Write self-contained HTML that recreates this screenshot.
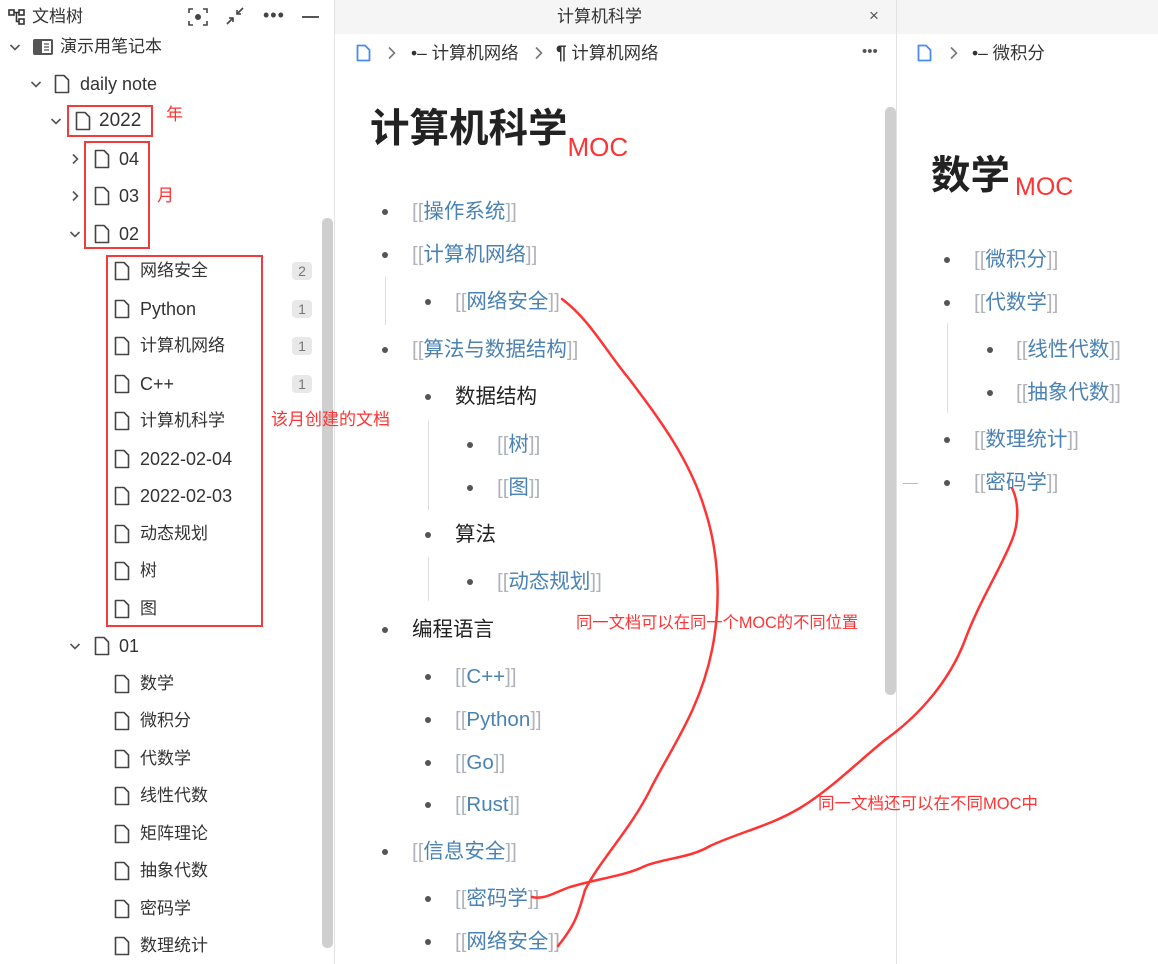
<!DOCTYPE html>
<html><head><meta charset="utf-8"><style>
*{margin:0;padding:0;box-sizing:border-box}
body{width:1158px;height:964px;overflow:hidden;background:#fff;font-family:"Liberation Sans","Noto Sans CJK SC",sans-serif;color:#222;position:relative}
.a{position:absolute;white-space:nowrap;line-height:24px}
.s{font-size:17px;color:#333}
.m{font-size:20.5px}
.l{color:#4a82b4}.b{color:#b0b4ba}
.dot{position:absolute;width:6px;height:6px;border-radius:50%;background:#555}
.vl{position:absolute;width:1px;background:#ddd}
.r{color:#f33}
.badge{position:absolute;left:292px;width:20px;height:18px;border-radius:4px;background:#e8e8e8;color:#777;font-size:14px;text-align:center;line-height:18px}
.box{position:absolute;border:2px solid #f03c3c}
svg.i{position:absolute}
</style></head><body>
<!-- sidebar -->
<div style="position:absolute;left:334px;top:0;width:1px;height:964px;background:#e2e2e2"></div>
<div style="position:absolute;left:322px;top:218px;width:11px;height:730px;background:#cfcfcf;border-radius:5px"></div>
<svg class="i" style="left:8px;top:9px" width="18" height="16" viewBox="0 0 18 16" fill="none" stroke="#333" stroke-width="1.6"><rect x="1" y="1" width="5" height="5"/><rect x="11" y="1" width="5" height="5"/><rect x="11" y="10" width="5" height="5"/><path d="M6 3.5h5M8.5 3.5v9h2.5"/></svg>
<div class="a s" style="left:32px;top:5px">文档树</div>
<svg class="i" style="left:188px;top:8px" width="20" height="18" viewBox="0 0 20 18" fill="none" stroke="#444" stroke-width="1.6"><path d="M1 5V1h4M15 1h4v4M19 13v4h-4M5 17H1v-4"/><circle cx="10" cy="9" r="2.2" fill="#444"/></svg>
<svg class="i" style="left:226px;top:7px" width="18" height="18" viewBox="0 0 18 18" fill="none" stroke="#444" stroke-width="1.6"><path d="M17 1l-6 6M11 3v4h4M1 17l6-6M7 15v-4H3"/></svg>
<div class="a" style="left:263px;top:3px;font-size:18px;color:#444;letter-spacing:1px">•••</div>
<div style="position:absolute;left:302px;top:16px;width:17px;height:2px;background:#555"></div>
<svg width="0" height="0" style="position:absolute"><defs>
<symbol id="chev" viewBox="0 0 12 12"><path d="M1.5 4l4.5 4.5L10.5 4" fill="none" stroke="#555" stroke-width="1.6"/></symbol>
<symbol id="chr" viewBox="0 0 12 12"><path d="M4 1.5l4.5 4.5L4 10.5" fill="none" stroke="#555" stroke-width="1.6"/></symbol>
<symbol id="doc" viewBox="0 0 16 20"><path d="M1.5 1.5h8.5l4.5 4.5v12.5h-13z" fill="none" stroke="#444" stroke-width="1.6" stroke-linejoin="round"/></symbol>
</defs></svg>
<svg class="i" style="left:9px;top:41px" width="12" height="12"><use href="#chev"/></svg>
<svg class="i" style="left:33px;top:39px" width="20" height="16" viewBox="0 0 20 16"><rect x="0" y="0" width="20" height="16" rx="2" fill="#555"/><rect x="9" y="2" width="9" height="12" fill="#fff"/><path d="M11 5h5M11 8h5M11 11h5" stroke="#555" stroke-width="1.2"/></svg>
<div class="a s" style="left:60px;top:35px">演示用笔记本</div>
<svg class="i" style="left:30px;top:78px" width="12" height="12"><use href="#chev"/></svg>
<svg class="i" style="left:54px;top:74px" width="16" height="20"><use href="#doc"/></svg>
<div class="a s" style="left:80px;top:72px;font-size:18px">daily note</div>
<svg class="i" style="left:50px;top:115px" width="12" height="12"><use href="#chev"/></svg>
<svg class="i" style="left:75px;top:111px" width="16" height="20"><use href="#doc"/></svg>
<div class="a s" style="left:99px;top:109px;font-size:19px">2022</div>
<svg class="i" style="left:69px;top:153px" width="12" height="12"><use href="#chr"/></svg>
<svg class="i" style="left:94px;top:149px" width="16" height="20"><use href="#doc"/></svg>
<div class="a s" style="left:119px;top:147px;font-size:18px">04</div>
<svg class="i" style="left:69px;top:190px" width="12" height="12"><use href="#chr"/></svg>
<svg class="i" style="left:94px;top:186px" width="16" height="20"><use href="#doc"/></svg>
<div class="a s" style="left:119px;top:184px;font-size:18px">03</div>
<svg class="i" style="left:69px;top:228px" width="12" height="12"><use href="#chev"/></svg>
<svg class="i" style="left:94px;top:224px" width="16" height="20"><use href="#doc"/></svg>
<div class="a s" style="left:119px;top:222px;font-size:18px">02</div>
<svg class="i" style="left:114px;top:261px" width="16" height="20"><use href="#doc"/></svg><div class="a s" style="left:140px;top:259px">网络安全</div><div class="badge" style="top:262px">2</div>
<svg class="i" style="left:114px;top:299px" width="16" height="20"><use href="#doc"/></svg><div class="a s" style="left:140px;top:297px;font-size:18px">Python</div><div class="badge" style="top:300px">1</div>
<svg class="i" style="left:114px;top:336px" width="16" height="20"><use href="#doc"/></svg><div class="a s" style="left:140px;top:334px">计算机网络</div><div class="badge" style="top:337px">1</div>
<svg class="i" style="left:114px;top:374px" width="16" height="20"><use href="#doc"/></svg><div class="a s" style="left:140px;top:372px;font-size:18px">C++</div><div class="badge" style="top:375px">1</div>
<svg class="i" style="left:114px;top:411px" width="16" height="20"><use href="#doc"/></svg><div class="a s" style="left:140px;top:409px">计算机科学</div>
<svg class="i" style="left:114px;top:449px" width="16" height="20"><use href="#doc"/></svg><div class="a s" style="left:140px;top:447px;font-size:18px">2022-02-04</div>
<svg class="i" style="left:114px;top:486px" width="16" height="20"><use href="#doc"/></svg><div class="a s" style="left:140px;top:484px;font-size:18px">2022-02-03</div>
<svg class="i" style="left:114px;top:524px" width="16" height="20"><use href="#doc"/></svg><div class="a s" style="left:140px;top:522px">动态规划</div>
<svg class="i" style="left:114px;top:561px" width="16" height="20"><use href="#doc"/></svg><div class="a s" style="left:140px;top:559px">树</div>
<svg class="i" style="left:114px;top:599px" width="16" height="20"><use href="#doc"/></svg><div class="a s" style="left:140px;top:597px">图</div>
<svg class="i" style="left:69px;top:640px" width="12" height="12"><use href="#chev"/></svg>
<svg class="i" style="left:94px;top:636px" width="16" height="20"><use href="#doc"/></svg>
<div class="a s" style="left:119px;top:634px;font-size:18px">01</div>
<svg class="i" style="left:114px;top:674px" width="16" height="20"><use href="#doc"/></svg><div class="a s" style="left:140px;top:672px">数学</div>
<svg class="i" style="left:114px;top:711px" width="16" height="20"><use href="#doc"/></svg><div class="a s" style="left:140px;top:709px">微积分</div>
<svg class="i" style="left:114px;top:749px" width="16" height="20"><use href="#doc"/></svg><div class="a s" style="left:140px;top:747px">代数学</div>
<svg class="i" style="left:114px;top:786px" width="16" height="20"><use href="#doc"/></svg><div class="a s" style="left:140px;top:784px">线性代数</div>
<svg class="i" style="left:114px;top:824px" width="16" height="20"><use href="#doc"/></svg><div class="a s" style="left:140px;top:822px">矩阵理论</div>
<svg class="i" style="left:114px;top:861px" width="16" height="20"><use href="#doc"/></svg><div class="a s" style="left:140px;top:859px">抽象代数</div>
<svg class="i" style="left:114px;top:899px" width="16" height="20"><use href="#doc"/></svg><div class="a s" style="left:140px;top:897px">密码学</div>
<svg class="i" style="left:114px;top:936px" width="16" height="20"><use href="#doc"/></svg><div class="a s" style="left:140px;top:934px">数理统计</div>
<div class="box" style="left:67px;top:105px;width:86px;height:32px"></div>
<div class="box" style="left:84px;top:141px;width:66px;height:108px"></div>
<div class="box" style="left:106px;top:255px;width:157px;height:372px"></div>
<div class="a r" style="left:166px;top:103px;font-size:17px">年</div>
<div class="a r" style="left:157px;top:184px;font-size:17px">月</div>
<div class="a r" style="left:271px;top:408px;font-size:17px">该月创建的文档</div>

<!-- middle panel -->
<div style="position:absolute;left:335px;top:0;width:562px;height:34px;background:#f5f5f5"></div>
<div style="position:absolute;left:896px;top:0;width:1px;height:964px;background:#e2e2e2"></div>
<div style="position:absolute;left:897px;top:0;width:261px;height:34px;background:#f5f5f5"></div>
<div class="a" style="left:557px;top:5px;font-size:17px;color:#333">计算机科学</div>
<div class="a" style="left:869px;top:4px;font-size:17px;color:#555">×</div>
<svg class="i" style="left:356px;top:44px" width="15" height="18" viewBox="0 0 15 18"><path d="M1.5 1.5h7.5l4.5 4.5v10.5h-12z" fill="none" stroke="#4a8af4" stroke-width="1.8" stroke-linejoin="round"/></svg>
<svg class="i" style="left:386px;top:46px" width="12" height="14" viewBox="0 0 12 14"><path d="M3 1.5l5.5 5.5L3 12.5" fill="none" stroke="#777" stroke-width="1.6"/></svg>
<div class="a" style="left:411px;top:41px;font-size:17.4px;color:#333">•– 计算机网络</div>
<svg class="i" style="left:533px;top:46px" width="12" height="14" viewBox="0 0 12 14"><path d="M3 1.5l5.5 5.5L3 12.5" fill="none" stroke="#777" stroke-width="1.6"/></svg>
<div class="a" style="left:556px;top:41px;font-size:17.4px;color:#333"><b style="font-size:19px">¶</b> 计算机网络</div>
<div class="a" style="left:862px;top:40px;font-size:15px;color:#555">•••</div>
<div style="position:absolute;left:885px;top:107px;width:11px;height:588px;background:#cfcfcf;border-radius:5px"></div>
<div class="a" style="left:370px;top:105px;font-size:39.5px;font-weight:bold;line-height:48px">计算机科学<span class="r" style="font-size:26px;font-weight:normal;vertical-align:-14px">MOC</span></div>

<div class="dot" style="left:382px;top:209px"></div><div class="a m" style="left:412px;top:200px"><span class="b">[[</span><span class="l">操作系统</span><span class="b">]]</span></div>
<div class="dot" style="left:382px;top:252px"></div><div class="a m" style="left:412px;top:243px"><span class="b">[[</span><span class="l">计算机网络</span><span class="b">]]</span></div>
<div class="vl" style="left:385px;top:277px;height:48px"></div>
<div class="dot" style="left:425px;top:299px"></div><div class="a m" style="left:455px;top:290px"><span class="b">[[</span><span class="l">网络安全</span><span class="b">]]</span></div>
<div class="dot" style="left:382px;top:347px"></div><div class="a m" style="left:412px;top:338px"><span class="b">[[</span><span class="l">算法与数据结构</span><span class="b">]]</span></div>
<div class="dot" style="left:425px;top:394px"></div><div class="a m" style="left:455px;top:385px">数据结构</div>
<div class="vl" style="left:428px;top:420px;height:90px"></div>
<div class="dot" style="left:467px;top:442px"></div><div class="a m" style="left:497px;top:433px"><span class="b">[[</span><span class="l">树</span><span class="b">]]</span></div>
<div class="dot" style="left:467px;top:485px"></div><div class="a m" style="left:497px;top:476px"><span class="b">[[</span><span class="l">图</span><span class="b">]]</span></div>
<div class="dot" style="left:425px;top:532px"></div><div class="a m" style="left:455px;top:523px">算法</div>
<div class="vl" style="left:428px;top:557px;height:44px"></div>
<div class="dot" style="left:467px;top:579px"></div><div class="a m" style="left:497px;top:570px"><span class="b">[[</span><span class="l">动态规划</span><span class="b">]]</span></div>
<div class="dot" style="left:382px;top:627px"></div><div class="a m" style="left:412px;top:618px">编程语言</div>
<div class="dot" style="left:425px;top:674px"></div><div class="a m" style="left:455px;top:665px"><span class="b">[[</span><span class="l">C++</span><span class="b">]]</span></div>
<div class="dot" style="left:425px;top:717px"></div><div class="a m" style="left:455px;top:708px"><span class="b">[[</span><span class="l">Python</span><span class="b">]]</span></div>
<div class="dot" style="left:425px;top:760px"></div><div class="a m" style="left:455px;top:751px"><span class="b">[[</span><span class="l">Go</span><span class="b">]]</span></div>
<div class="dot" style="left:425px;top:802px"></div><div class="a m" style="left:455px;top:793px"><span class="b">[[</span><span class="l">Rust</span><span class="b">]]</span></div>
<div class="dot" style="left:382px;top:849px"></div><div class="a m" style="left:412px;top:840px"><span class="b">[[</span><span class="l">信息安全</span><span class="b">]]</span></div>
<div class="dot" style="left:425px;top:896px"></div><div class="a m" style="left:455px;top:887px"><span class="b">[[</span><span class="l">密码学</span><span class="b">]]</span></div>
<div class="dot" style="left:425px;top:939px"></div><div class="a m" style="left:455px;top:930px"><span class="b">[[</span><span class="l">网络安全</span><span class="b">]]</span></div>

<!-- right panel -->
<svg class="i" style="left:917px;top:44px" width="15" height="18" viewBox="0 0 15 18"><path d="M1.5 1.5h7.5l4.5 4.5v10.5h-12z" fill="none" stroke="#4a8af4" stroke-width="1.8" stroke-linejoin="round"/></svg>
<svg class="i" style="left:948px;top:46px" width="12" height="14" viewBox="0 0 12 14"><path d="M3 1.5l5.5 5.5L3 12.5" fill="none" stroke="#777" stroke-width="1.6"/></svg>
<div class="a" style="left:972px;top:41px;font-size:17.4px;color:#333">•– 微积分</div>
<div class="a" style="left:931px;top:152px;font-size:39.5px;font-weight:bold;line-height:48px">数学<span class="r" style="font-size:25px;font-weight:normal;vertical-align:-6px;margin-left:5px">MOC</span></div>
<div class="dot" style="left:944px;top:257px"></div><div class="a m" style="left:974px;top:248px"><span class="b">[[</span><span class="l">微积分</span><span class="b">]]</span></div>
<div class="dot" style="left:944px;top:300px"></div><div class="a m" style="left:974px;top:291px"><span class="b">[[</span><span class="l">代数学</span><span class="b">]]</span></div>
<div class="vl" style="left:947px;top:323px;height:90px"></div>
<div class="dot" style="left:987px;top:347px"></div><div class="a m" style="left:1016px;top:338px"><span class="b">[[</span><span class="l">线性代数</span><span class="b">]]</span></div>
<div class="dot" style="left:987px;top:390px"></div><div class="a m" style="left:1016px;top:381px"><span class="b">[[</span><span class="l">抽象代数</span><span class="b">]]</span></div>
<div class="dot" style="left:944px;top:437px"></div><div class="a m" style="left:974px;top:428px"><span class="b">[[</span><span class="l">数理统计</span><span class="b">]]</span></div>
<div class="dot" style="left:944px;top:480px"></div><div class="a m" style="left:974px;top:471px"><span class="b">[[</span><span class="l">密码学</span><span class="b">]]</span></div>
<div style="position:absolute;left:903px;top:483px;width:15px;height:1px;background:#bbb"></div>

<div class="a r" style="left:576px;top:611px;font-size:16.3px">同一文档可以在同一个MOC的不同位置</div>
<div class="a r" style="left:818px;top:792px;font-size:16.5px">同一文档还可以在不同MOC中</div>
<svg class="i" style="left:0;top:0" width="1158" height="964" fill="none" stroke="#f33" stroke-width="2.5" stroke-linecap="round" stroke-linejoin="round">
<path d="M562 299 C590 320 605 350 630 380 C660 420 690 460 705 510 C718 550 722 600 712 650 C700 710 670 750 650 790 C630 830 600 860 585 890 C578 915 575 925 558 946"/>
<path d="M532 897 C545 900 555 892 570 887 C600 878 625 876 645 866 C665 858 690 858 710 846 C740 832 770 826 800 808 C830 790 860 760 885 740 C920 715 950 680 965 640 C980 600 1000 570 1012 540 C1020 520 1018 500 1012 488"/>
</svg>
</body></html>
